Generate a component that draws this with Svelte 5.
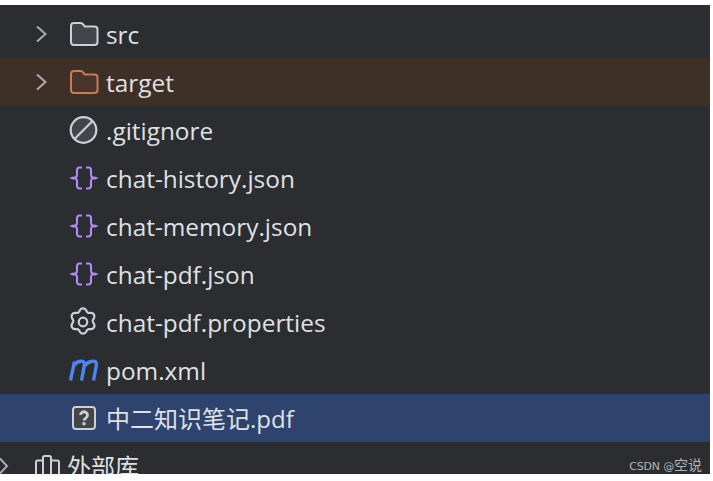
<script>
  const files = [
    { name: 'src', icon: 'folder', arrow: true },
    { name: 'target', icon: 'folderx', arrow: true, cls: 'excluded' },
    { name: '.gitignore', icon: 'ignore' },
    { name: 'chat-history.json', icon: 'json' },
    { name: 'chat-memory.json', icon: 'json' },
    { name: 'chat-pdf.json', icon: 'json' },
    { name: 'chat-pdf.properties', icon: 'gear' },
    { name: 'pom.xml', icon: 'maven' },
    { name: '中二知识笔记.pdf', icon: 'unknown', cls: 'selected' }
  ];
</script>

<div class="page">
  <div class="panel">
    <ul class="tree">
      {#each files as f}
        <li class="row {f.cls ?? ''}">
          <span class="arrow">
            {#if f.arrow}
              <svg width="14" height="18" viewBox="0 0 14 18"><path d="M2 1.500 L10.500 9 L2 16.500" fill="none" stroke="#a9acb2" stroke-width="2"/></svg>
            {/if}
          </span>
          <span class="icon">
            {#if f.icon === 'folder'}
              <svg width="30" height="26" viewBox="0 0 30 26"><path d="M2 5 a3 3 0 0 1 3-3 h6.500 a3 3 0 0 1 2 .8 l2.500 2.700 h9.500 a3 3 0 0 1 3 3 V21 a3 3 0 0 1-3 3 H5 a3 3 0 0 1-3-3 Z" fill="#43454a" stroke="#ced0d6" stroke-width="2"/></svg>
            {:else if f.icon === 'folderx'}
              <svg width="30" height="26" viewBox="0 0 30 26"><path d="M2 5 a3 3 0 0 1 3-3 h6.500 a3 3 0 0 1 2 .8 l2.500 2.700 h9.500 a3 3 0 0 1 3 3 V21 a3 3 0 0 1-3 3 H5 a3 3 0 0 1-3-3 Z" fill="#4a342c" stroke="#c77d55" stroke-width="2"/></svg>
            {:else if f.icon === 'ignore'}
              <svg width="30" height="30" viewBox="0.500 0 30 30"><circle cx="15" cy="15" r="12.800" fill="#43454a" stroke="#ced0d6" stroke-width="2.200"/><path d="M6 24 L24 6" stroke="#ced0d6" stroke-width="2.200"/></svg>
            {:else if f.icon === 'json'}
              <svg width="30" height="26" viewBox="1 0 30 26"><path d="M14 2.500 H11.500 a2.500 2.500 0 0 0-2.500 2.500 V9.500 a3.500 3.500 0 0 1-5 3.500 a3.500 3.500 0 0 1 5 3.500 V21 a2.500 2.500 0 0 0 2.500 2.500 H14 M18 2.500 H20.500 a2.500 2.500 0 0 1 2.500 2.500 V9.500 a3.500 3.500 0 0 0 5 3.500 a3.500 3.500 0 0 0-5 3.500 V21 a2.500 2.500 0 0 1-2.500 2.500 H18" fill="none" stroke="#b189f5" stroke-width="2.200"/></svg>
            {:else if f.icon === 'gear'}
              <svg width="30" height="30" viewBox="1 0 30 30"><path d="M12 3 a3.500 3.500 0 0 1 6 0 l1 1.800 a2.500 2.500 0 0 0 2 1.100 l2 0 a3.500 3.500 0 0 1 3 5.200 l-1 1.700 a2.500 2.500 0 0 0 0 2.400 l1 1.700 a3.500 3.500 0 0 1-3 5.200 l-2 0 a2.500 2.500 0 0 0-2 1.100 l-1 1.800 a3.500 3.500 0 0 1-6 0 l-1-1.800 a2.500 2.500 0 0 0-2-1.100 l-2 0 a3.500 3.500 0 0 1-3-5.200 l1-1.700 a2.500 2.500 0 0 0 0-2.400 l-1-1.700 a3.500 3.500 0 0 1 3-5.200 l2 0 a2.500 2.500 0 0 0 2-1.100 Z" fill="none" stroke="#ced0d6" stroke-width="2.200"/><circle cx="15" cy="15" r="4.300" fill="none" stroke="#ced0d6" stroke-width="2.200"/></svg>
            {:else if f.icon === 'maven'}
              <svg width="32" height="24" viewBox="1 0 32 24"><path d="M2.500 22.500 L6.500 3.500 M5.500 8 C8 3.500 15 1.500 16.300 5 C16.700 6.500 16.300 8 16 9.500 L13.500 22.500 M16.500 8 C19.500 3.500 27 1.500 28.300 5 C28.700 6.500 28.300 8 28 9.500 L25.500 22.500" fill="none" stroke="#4d85f2" stroke-width="3.400"/></svg>
            {:else}
              <svg width="30" height="26" viewBox="0 0 30 26"><rect x="4" y="2" width="22" height="22" rx="3" fill="#43454a" stroke="#ced0d6" stroke-width="2"/><path d="M11.500 10 a3.500 3.300 0 1 1 5.500 2.800 c-1.300 .9-2 1.400-2 2.800" fill="none" stroke="#ced0d6" stroke-width="2.800"/><rect x="13.500" y="17.200" width="3" height="3" fill="#ced0d6"/></svg>
            {/if}
          </span>
          <span class="name">{f.name}</span>
        </li>
      {/each}
    </ul>
    <div class="row external">
      <span class="ext-arrow"><svg width="10" height="18" viewBox="0 0 10 18"><path d="M0 1.500 L7 9 L0 16.500" fill="none" stroke="#a9acb2" stroke-width="2"/></svg></span>
      <span class="ext-icon"><svg width="26" height="26" viewBox="0.500 0 26 26"><path d="M1.500 25 V9 a1.500 1.500 0 0 1 1.500-1.500 H8.500 M8.500 25 V4.500 a1.500 1.500 0 0 1 1.500-1.500 H15 a1.500 1.500 0 0 1 1.500 1.500 V25 M16.500 7.500 H23 a1.500 1.500 0 0 1 1.500 1.500 V25 M1.500 25 H24.500" fill="none" stroke="#ced0d6" stroke-width="2"/></svg></span>
      <span class="name ext-name">外部库</span>
    </div>
    <span class="mark">CSDN @<span class="mark-cjk">空说</span></span>
  </div>
</div>

<style>
  :global(body) { margin: 0; background: #fff; }
  .page { width: 713px; height: 481px; padding-top: 5px; box-sizing: border-box; }
  .panel {
    position: relative;
    width: 710px;
    height: 469px;
    padding-top: 5px;
    box-sizing: border-box;
    background: #2b2d30;
    overflow: hidden;
    font-family: "Open Sans", "Noto Sans CJK SC", sans-serif;
    font-size: 24.4px;
    color: #dfe1e5;
  }
  .tree { list-style: none; margin: 0; padding: 0; }
  .row { display: flex; align-items: center; height: 48px; }
  .excluded { background: #3f3027; }
  .selected { background: #2e436e; }
  .selected .name { font-size: 24px; }
  .arrow { width: 34px; padding-left: 35px; display: flex; align-items: center; height: 18px; }
  .icon { width: 37px; display: flex; align-items: center; }
  .name { white-space: nowrap; line-height: 46px; padding-top: 2px; }
  .ext-arrow { width: 35px; display: flex; align-items: center; }
  .ext-icon { width: 32px; display: flex; align-items: center; }
  .ext-name { font-size: 24px; }
  .mark {
    position: absolute;
    right: 8px;
    bottom: 0;
    font-family: "DejaVu Sans", "Noto Sans CJK SC", sans-serif;
    font-size: 11px;
    line-height: 15px;
    letter-spacing: -0.2px;
    color: #b4b4b4;
  }
  .mark-cjk { font-size: 14px; letter-spacing: 0; font-family: "Noto Sans CJK SC", sans-serif; }
</style>
